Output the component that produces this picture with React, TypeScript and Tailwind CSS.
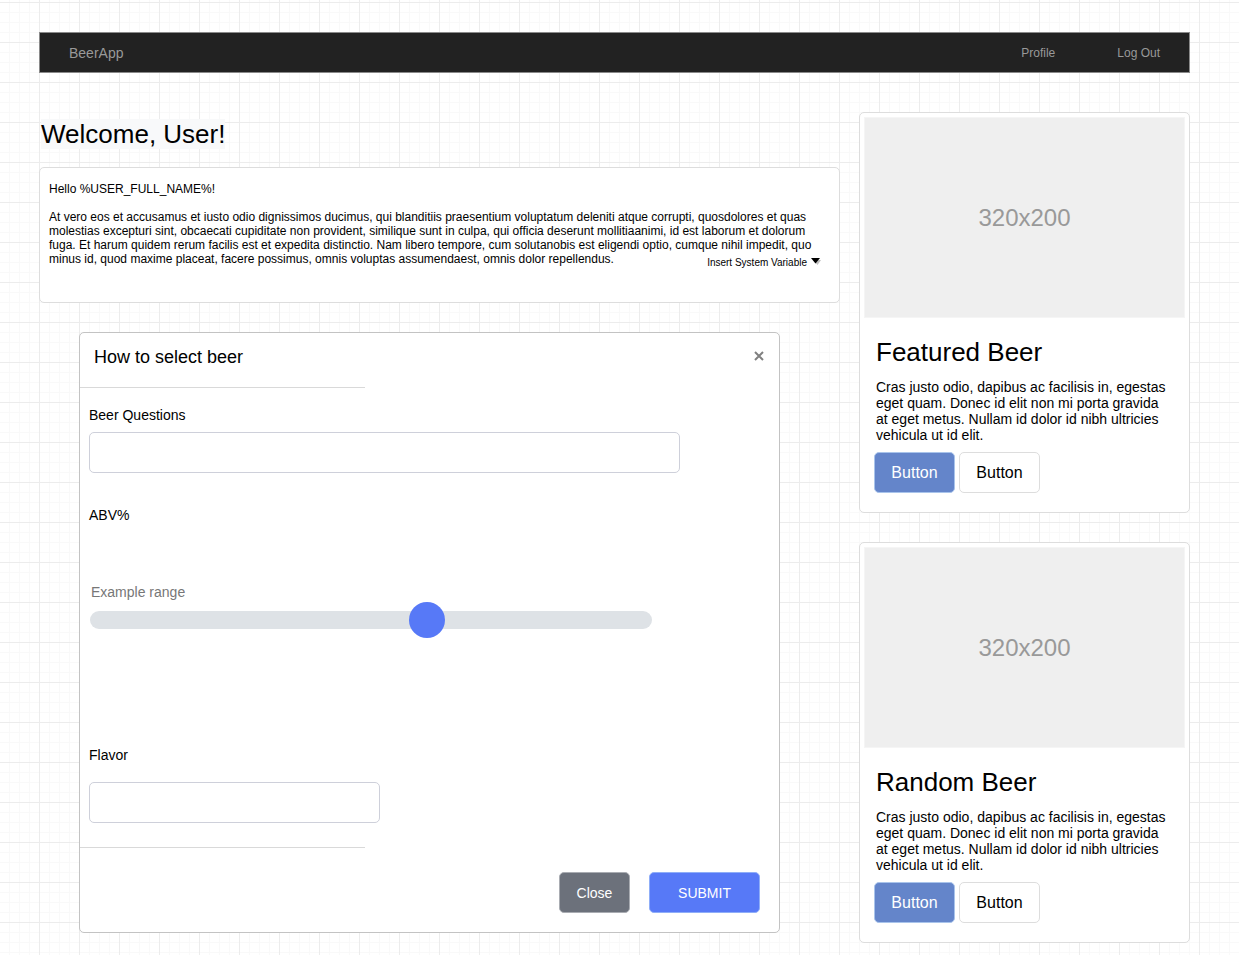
import React from "react";

const cards = [
  { title: "Featured Beer" },
  { title: "Random Beer" },
];

function Navbar() {
  return (
    <nav className="flex h-[41px] items-center justify-between border border-[#8a8a8a] bg-[#222222] px-[29px] text-[#999999]">
      <a href="#home" className="text-sm">
        BeerApp
      </a>
      <div className="flex gap-[62px] text-xs">
        <a href="#profile">Profile</a>
        <a href="#logout">Log Out</a>
      </div>
    </nav>
  );
}

function WelcomeMessage() {
  return (
    <section className="mt-[18px] flex flex-col rounded-[5px] border border-[#dddddd] bg-white pt-[14px] pr-[18px] pb-[33px] pl-[9px] text-xs leading-[14px]">
      <p>Hello %USER_FULL_NAME%!</p>
      <p className="mt-[14px]">
        At vero eos et accusamus et iusto odio dignissimos ducimus, qui blanditiis praesentium
        voluptatum deleniti atque corrupti, quosdolores et quas molestias excepturi sint, obcaecati
        cupiditate non provident, similique sunt in culpa, qui officia deserunt mollitiaanimi, id
        est laborum et dolorum fuga. Et harum quidem rerum facilis est et expedita distinctio. Nam
        libero tempore, cum solutanobis est eligendi optio, cumque nihil impedit, quo minus id, quod
        maxime placeat, facere possimus, omnis voluptas assumendaest, omnis dolor repellendus.
      </p>
      <button type="button" className="-mt-[10px] flex items-start gap-1 self-end text-[10px] leading-[13px]">
        Insert System Variable
        <svg width="10" height="10" viewBox="0 0 10 10" aria-hidden="true" className="mt-px">
          <path d="M2 3h8L6.500 8z" fill="#c0c0c0" />
          <path d="M0 1h9L4.500 6.500z" fill="#000000" />
        </svg>
      </button>
    </section>
  );
}

function Divider() {
  return <hr className="w-[285px] max-w-full border-[#d9d9d9]" />;
}

function SelectBeerForm() {
  return (
    <form className="mt-[29px] mr-[60px] ml-10 rounded-[5px] border border-[#c3c3c3] bg-white text-sm leading-5">
      <header className="flex items-start justify-between pt-3 pr-[15px] pb-[18px] pl-[14px]">
        <h2 className="text-lg leading-6">How to select beer</h2>
        <button type="button" aria-label="Dismiss" className="flex h-[22px] items-center">
          <svg width="10" height="10" viewBox="0 0 10 10" aria-hidden="true">
            <path d="M1 1l8 8M9 1l-8 8" stroke="#808080" strokeWidth="2" />
          </svg>
        </button>
      </header>
      <Divider />
      <div className="flex flex-col items-start px-[9px]">
        <label htmlFor="questions" className="mt-[17px]">
          Beer Questions
        </label>
        <input
          id="questions"
          type="text"
          className="mt-[7px] h-[41px] w-[591px] max-w-full rounded-[5px] border border-[#ced0da] bg-white px-3"
        />
        <p className="mt-8">ABV%</p>
        <label htmlFor="abv" className="mt-[57px] pl-[2px] text-[#777777]">
          Example range
        </label>
        <input
          id="abv"
          type="range"
          min={0}
          max={33}
          defaultValue={20}
          className="ml-px block h-9 w-[562px] max-w-full appearance-none bg-transparent [&::-webkit-slider-runnable-track]:h-[18px] [&::-webkit-slider-runnable-track]:rounded-full [&::-webkit-slider-runnable-track]:bg-[#dee2e6] [&::-webkit-slider-thumb]:-mt-[9px] [&::-webkit-slider-thumb]:h-9 [&::-webkit-slider-thumb]:w-9 [&::-webkit-slider-thumb]:appearance-none [&::-webkit-slider-thumb]:rounded-full [&::-webkit-slider-thumb]:bg-[#5779f7]"
        />
        <label htmlFor="flavor" className="mt-[107px]">
          Flavor
        </label>
        <input
          id="flavor"
          type="text"
          className="mt-[17px] h-[41px] w-[291px] max-w-full rounded-[5px] border border-[#ced0da] bg-white px-3"
        />
      </div>
      <div className="mt-6">
        <Divider />
      </div>
      <footer className="flex justify-end gap-[19px] pt-6 pr-[19px] pb-[19px] text-white">
        <button type="button" className="h-[41px] w-[71px] rounded-[5px] border border-[#a9acb2] bg-[#6c717b]">
          Close
        </button>
        <button type="submit" className="h-[41px] w-[111px] rounded-[5px] border border-[#8faef8] bg-[#5779f7]">
          SUBMIT
        </button>
      </footer>
    </form>
  );
}

function BeerCard({ title }: { title: string }) {
  return (
    <article className="rounded-[5px] border border-[#dddddd] bg-white p-1">
      <div className="flex h-[201px] items-center justify-center border border-[#f5f5f5] bg-[#efefef] text-2xl text-[#999999]">
        320x200
      </div>
      <div className="pr-4 pb-[15px] pl-3">
        <h2 className="mt-[19px] text-[26px] leading-[30px]">{title}</h2>
        <p className="mt-3 text-sm leading-4">
          Cras justo odio, dapibus ac facilisis in, egestas eget quam. Donec id elit non mi porta
          gravida at eget metus. Nullam id dolor id nibh ultricies vehicula ut id elit.
        </p>
        <div className="mt-[9px] -ml-[2px] flex gap-1">
          <button type="button" className="h-[41px] w-[81px] rounded-[5px] border border-[#a9c4eb] bg-[#6485ca] text-white">
            Button
          </button>
          <button type="button" className="h-[41px] w-[81px] rounded-[5px] border border-[#dddddd] bg-white">
            Button
          </button>
        </div>
      </div>
    </article>
  );
}

export default function App() {
  return (
    <div className="min-h-screen bg-white bg-[linear-gradient(to_right,#ececec_1px,transparent_1px),linear-gradient(to_bottom,#ececec_1px,transparent_1px),linear-gradient(to_right,#f9f9f9_1px,transparent_1px),linear-gradient(to_bottom,#f9f9f9_1px,transparent_1px)] bg-[size:40px_40px,40px_40px,10px_10px,10px_10px] bg-[position:39px_2px,39px_2px,9px_2px,9px_2px] pt-8 pr-[49px] pb-3 pl-[39px] font-['Liberation_Sans',Arial,sans-serif] text-black">
      <Navbar />
      <div className="mt-[39px] flex items-start gap-[19px]">
        <main className="min-w-0 flex-1 pt-[7px]">
          <h1 className="ml-[2px] w-fit bg-[#f8f9fa] text-[26px] leading-[30px]">Welcome, User!</h1>
          <WelcomeMessage />
          <SelectBeerForm />
        </main>
        <aside className="flex w-[331px] shrink-0 flex-col gap-[29px]">
          {cards.map((card) => (
            <BeerCard key={card.title} title={card.title} />
          ))}
        </aside>
      </div>
    </div>
  );
}
